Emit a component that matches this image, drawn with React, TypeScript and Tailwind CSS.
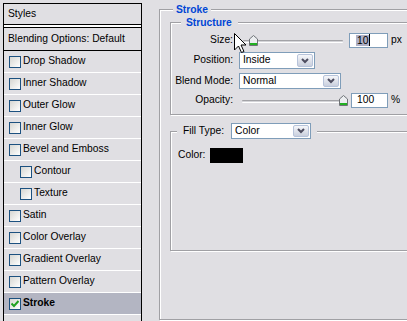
import React from "react";

const Check = ({ checked }: { checked?: boolean }) => (
  <span className="relative flex h-[12px] w-[12px] shrink-0 items-center justify-center border border-[#1c5180] bg-gradient-to-br from-[#d6d6d2] to-[#ffffff]">
    {checked && (
      <svg width="8" height="8" viewBox="0 0 8 8">
        <path d="M0.5 3.5 L3 6 L7.5 1" fill="none" stroke="#21a121" strokeWidth="2" />
      </svg>
    )}
  </span>
);

const Chevron = () => (
  <svg width="8" height="6" viewBox="0 0 8 6">
    <path d="M1 1 L4 4 L7 1" fill="none" stroke="#4d4d60" strokeWidth="2" />
  </svg>
);

const Select = ({ value, w, h }: { value: string; w: string; h: string }) => (
  <div className={`flex ${w} ${h} items-stretch border border-[#7f9db9] bg-white p-[1px]`}>
    <span className="flex flex-1 items-center pl-[2px]">{value}</span>
    <span className="flex w-[16px] items-center justify-center rounded-[2px] border border-[#b7c3da] bg-gradient-to-b from-[#f6f7fa] to-[#c9cfdd]">
      <Chevron />
    </span>
  </div>
);

const Thumb = () => (
  <svg width="9" height="11" viewBox="0 0 9 11">
    <path d="M0.5 4 L4.5 0.5 L8.5 4 V10.5 H0.5 Z" fill="#eceef0" stroke="#6f7276" />
    <rect x="1" y="8" width="7" height="2" fill="#22b022" />
  </svg>
);

const items: { label: string; indent?: boolean; checked?: boolean; active?: boolean }[] = [
  { label: "Drop Shadow" },
  { label: "Inner Shadow" },
  { label: "Outer Glow" },
  { label: "Inner Glow" },
  { label: "Bevel and Emboss" },
  { label: "Contour", indent: true },
  { label: "Texture", indent: true },
  { label: "Satin" },
  { label: "Color Overlay" },
  { label: "Gradient Overlay" },
  { label: "Pattern Overlay" },
  { label: "Stroke", checked: true, active: true },
];

export default function App() {
  return (
    <div className="relative flex h-[321px] w-[407px] overflow-hidden bg-[#e0dfe3] font-['Liberation_Sans',Arial,sans-serif] text-[10.3px] leading-none text-black">
      {/* Left styles list */}
      <div className="ml-[3px] mt-[3px] flex h-[340px] w-[139px] shrink-0 flex-col border border-black">
        <div className="flex h-[21px] shrink-0 items-center border-b border-black pl-[4px]">Styles</div>
        <div className="h-[2px] shrink-0 bg-white" />
        <div className="flex h-[24px] shrink-0 items-center border-y border-black pl-[4px]">
          Blending Options: Default
        </div>
        {items.map((it) => (
          <div
            key={it.label}
            className={`flex h-[22px] shrink-0 items-center gap-[2px] border-b border-white ${
              it.indent ? "pl-[16px]" : "pl-[5px]"
            } ${it.active ? "bg-[#b3b5c2] font-bold" : ""}`}
          >
            <Check checked={it.checked} />
            <span>{it.label}</span>
          </div>
        ))}
      </div>

      {/* Right: Stroke group */}
      <fieldset className="ml-[17px] mt-[3px] h-[317px] w-[270px] shrink-0 border border-[#a0a0a4] shadow-[1px_1px_0_#fff,inset_1px_1px_0_#fff]">
        <legend className="ml-[13px] bg-[#e0dfe3] px-[3px] font-bold leading-[13px] text-[#0046d5]">Stroke</legend>

        {/* Structure */}
        <fieldset className="ml-[10px] w-[260px] border border-[#a0a0a4] pb-[6px] shadow-[1px_1px_0_#fff,inset_1px_1px_0_#fff]">
          <legend className="ml-[10px] bg-[#e0dfe3] pl-[5px] pr-[6px] font-bold leading-[13px] text-[#0046d5]">
            Structure
          </legend>

          <div className="mt-[3px] flex h-[16px] items-center">
            <span className="w-[62px] text-right">Size:</span>
            <div className="relative ml-[6px] h-[16px] w-[104px]">
              <div className="absolute left-[4px] top-[8px] h-[3px] w-[100px] rounded-[1px] border-t border-[#a3a3a7] border-b border-b-white bg-[#d4d4d8]" />
              <div className="absolute left-[10px] top-[3px] flex">
                <Thumb />
              </div>
            </div>
            <div className="ml-[6px] flex h-[15px] w-[39px] items-center border border-[#7f9db9] bg-white pl-[6px]">
              <span className="bg-[#aeb0c6] px-[1px] leading-[11px]">10</span>
              <span className="h-[12px] w-[1px] bg-black" />
            </div>
            <span className="ml-[3px]">px</span>
          </div>

          <div className="mt-[4px] flex h-[17px] items-center">
            <span className="w-[62px] text-right">Position:</span>
            <div className="ml-[6px]">
              <Select value="Inside" w="w-[76px]" h="h-[17px]" />
            </div>
          </div>

          <div className="mt-[4px] flex h-[16px] items-center">
            <span className="w-[62px] text-right">Blend Mode:</span>
            <div className="ml-[6px]">
              <Select value="Normal" w="w-[102px]" h="h-[16px]" />
            </div>
          </div>

          <div className="mt-[4px] flex h-[15px] items-center">
            <span className="w-[62px] text-right">Opacity:</span>
            <div className="relative ml-[6px] h-[15px] w-[104px]">
              <div className="absolute left-[3px] top-[7px] h-[3px] w-[101px] rounded-[1px] border-t border-[#a3a3a7] border-b border-b-white bg-[#d4d4d8]" />
              <div className="absolute left-[100px] top-[2px] flex">
                <Thumb />
              </div>
            </div>
            <div className="ml-[8px] flex h-[15px] w-[37px] items-center border border-[#7f9db9] bg-white pl-[5px]">
              100
            </div>
            <span className="ml-[3px]">%</span>
          </div>
        </fieldset>

        {/* Fill Type */}
        <fieldset className="ml-[10px] mt-[8px] w-[260px] border border-[#a0a0a4] pb-[87px] shadow-[1px_1px_0_#fff,inset_1px_1px_0_#fff]">
          <legend className="ml-[6px] bg-[#e0dfe3] px-[6px]">
            <div className="flex h-[16px] items-center">
              <span>Fill Type:</span>
              <div className="ml-[7px]">
                <Select value="Color" w="w-[80px]" h="h-[16px]" />
              </div>
            </div>
          </legend>
          <div className="mt-[9px] flex h-[15px] items-center pl-[7px]">
            <span className="w-[32px]">Color:</span>
            <span className="h-[15px] w-[33px] bg-black" />
          </div>
        </fieldset>
      </fieldset>

      {/* Mouse cursor */}
      <svg className="absolute left-[234px] top-[33px]" width="13" height="21" viewBox="0 0 13 21">
        <path
          d="M0.5 0.5 L0.5 17 L4.5 13 L7.5 19.5 L10 18.5 L7 12 L12 12 Z"
          fill="#fff"
          stroke="#000"
          strokeLinejoin="miter"
        />
      </svg>
    </div>
  );
}
